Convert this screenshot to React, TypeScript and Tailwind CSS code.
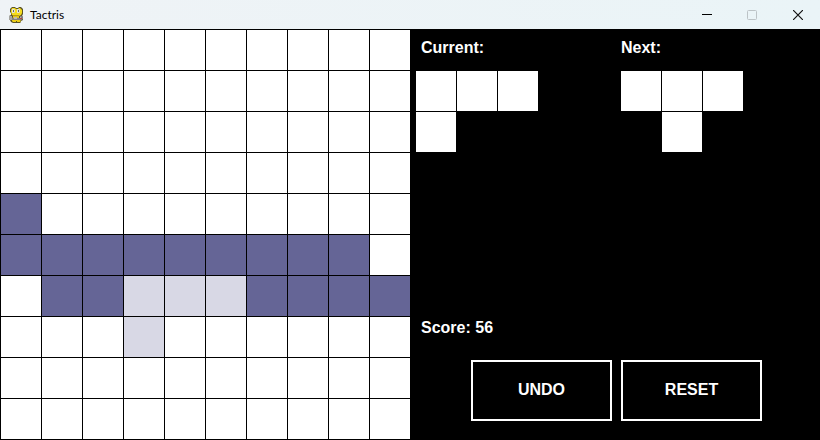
import React from "react";

const BOARD = [
  "..........",
  "..........",
  "..........",
  "..........",
  "#.........",
  "#########.",
  ".##ooo####",
  "...o......",
  "..........",
  "..........",
];

const CELL_COLORS: Record<string, string> = {
  ".": "bg-white",
  "#": "bg-[#656596]",
  o: "bg-[#d8d8e5]",
};

const CURRENT = ["###", "#.."];
const NEXT = ["###", ".#."];

function SnakeIcon() {
  return (
    <svg aria-hidden="true" className="h-4 w-4" viewBox="0 0 16 16">
      <path d="M4 0h3l1 1h2l1-1h2l2 2v5l-1 2 1 1v3l-2 1v1l-1 1H5l-2-1-1-2-1-1V9l2-1V6L2 5V2z" fill="#5c5428" />
      <path d="M4 1h3l1 1h2l1-1h1l2 2v3l-1 2-2 1H6L4 8 3 5V3z" fill="#f4dc1e" />
      <path d="M4 2h2l1 1v2L6 6H4zM9 2h2l1 1v2l-1 1H9z" fill="#e3e3dc" />
      <path d="M5 3h1v2H5zM10 3h1v2h-1z" fill="#6b6a5e" />
      <path d="M5 8h6v1H5z" fill="#b89a18" />
      <path d="M5 9h6v2H5z" fill="#e2c41c" />
      <path d="M1 9h3v1l1 2-1 1H2l-1-1z" fill="#a5a5a2" />
      <path d="M4 11h8V9h2l1 1v2l-2 1H4z" fill="#858280" />
      <path d="M6 10h3v2H6zM12 10h1v1h-1z" fill="#bcb9b4" />
      <path d="M12 11h2v1h-2z" fill="#b5453e" />
      <path d="M4 13h8l1 1-1 1H9v-1H8v1H5l-1-1z" fill="#edcf1a" />
    </svg>
  );
}

function TitleBar() {
  return (
    <header className="flex h-[29px] items-center bg-linear-to-r from-[#eff3f6] to-[#eaf4f7] pl-2 text-black">
      <SnakeIcon />
      <h1 className="ml-[6px] flex-1 font-['Lato','Noto_Sans',sans-serif] text-xs">Tactris</h1>
      <button type="button" aria-label="Minimize" className="flex h-full w-[45px] items-center justify-center">
        <svg className="h-[10px] w-[10px]" viewBox="0 0 10 10" shapeRendering="crispEdges">
          <path d="M0 4h10v1H0z" fill="#000" />
        </svg>
      </button>
      <button type="button" aria-label="Maximize" disabled className="flex h-full w-[46px] items-center justify-center">
        <svg className="h-[10px] w-[10px]" viewBox="0 0 10 10" fill="none">
          <rect x=".5" y=".5" width="9" height="9" rx="1" stroke="#bcc3c6" />
        </svg>
      </button>
      <button type="button" aria-label="Close" className="flex h-full w-[45px] items-center justify-center">
        <svg className="h-[10px] w-[10px]" viewBox="0 0 10 10" fill="none">
          <path d="M0 0l10 10M10 0L0 10" stroke="#111" strokeWidth="1.2" />
        </svg>
      </button>
    </header>
  );
}

function Board() {
  return (
    <div className="grid w-1/2 grid-cols-10 gap-px self-start bg-black pt-px pb-px pl-px">
      {BOARD.flatMap((row, y) =>
        row.split("").map((cell, x) => (
          <div key={`${x}-${y}`} className={`aspect-square ${CELL_COLORS[cell]}`} />
        )),
      )}
    </div>
  );
}

function Piece({ shape }: { shape: string[] }) {
  return (
    <div className="grid grid-cols-[repeat(3,40px)] gap-px">
      {shape.flatMap((row, y) =>
        row.split("").map((cell, x) => (
          <div key={`${x}-${y}`} className={`h-10 ${cell === "#" ? "bg-white" : ""}`} />
        )),
      )}
    </div>
  );
}

function GameButton({ children }: { children: React.ReactNode }) {
  return (
    <button type="button" className="h-[61px] flex-1 border-2 border-white pb-0.5 text-center font-bold">
      {children}
    </button>
  );
}

function SidePanel() {
  return (
    <aside className="flex w-1/2 flex-col pt-[9px] pb-[19px] font-['Liberation_Sans',Arial,sans-serif] text-base leading-5 font-bold text-white">
      <div className="grid grid-cols-2">
        <section className="pl-[6px]">
          <h2 className="mb-[13px] pl-[5px]">Current:</h2>
          <Piece shape={CURRENT} />
        </section>
        <section className="pl-[6px]">
          <h2 className="mb-[13px]">Next:</h2>
          <Piece shape={NEXT} />
        </section>
      </div>
      <p className="mt-auto pl-[11px]">Score: 56</p>
      <div className="mt-[22px] flex gap-[9px] pr-[58px] pl-[61px]">
        <GameButton>UNDO</GameButton>
        <GameButton>RESET</GameButton>
      </div>
    </aside>
  );
}

export default function App() {
  return (
    <div className="flex min-h-screen flex-col bg-black">
      <TitleBar />
      <main className="flex flex-1">
        <Board />
        <SidePanel />
      </main>
    </div>
  );
}
